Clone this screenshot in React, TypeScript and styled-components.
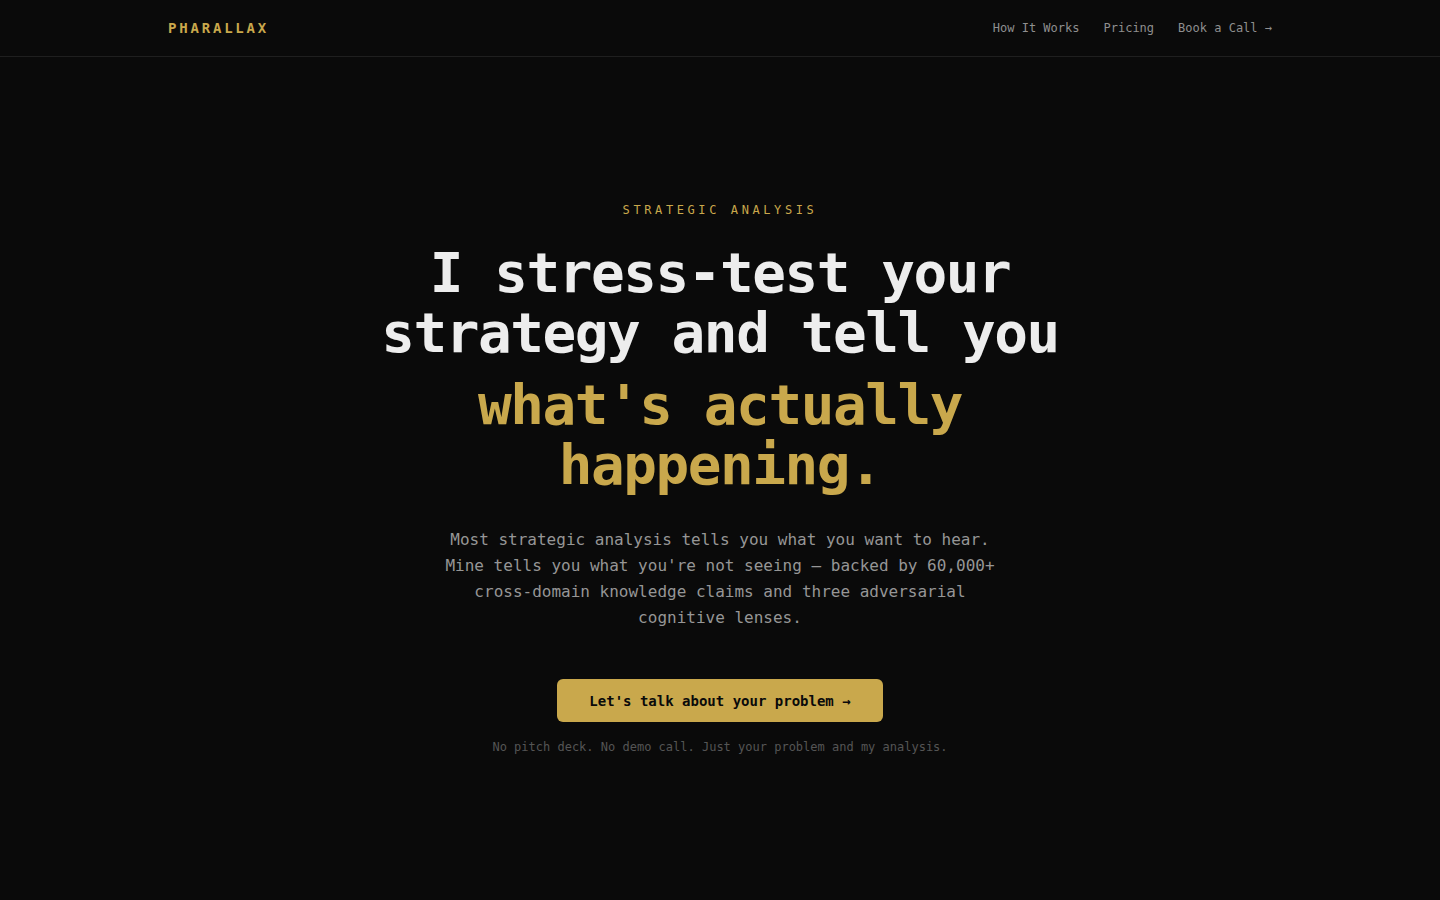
import styled, { createGlobalStyle } from "styled-components";

const GlobalStyle = createGlobalStyle`
    * {
        box-sizing: border-box;
    }

    body {
        margin: 0;
        background-color: #0a0a0a;
        color: #ededed;
        font-family: "DejaVu Sans Mono", "Liberation Mono", monospace;
    }
`

const Page = styled.div`
    min-height: 100vh;
    display: flex;
    flex-direction: column;
`

const Header = styled.header`
    border-bottom: 1px solid #1f1f1f;
`

const HeaderInner = styled.div`
    max-width: 1200px;
    margin: 0 auto;
    padding: 0 48px;
    height: 56px;
    display: flex;
    align-items: center;
    justify-content: space-between;
`

const Logo = styled.a`
    font-size: 14px;
    font-weight: 700;
    letter-spacing: 0.2em;
    color: #c9a84c;
    text-decoration: none;
`

const Nav = styled.nav`
    display: flex;
    gap: 24px;
`

const NavLink = styled.a`
    font-size: 12px;
    color: #8f8f8f;
    text-decoration: none;
`

const Hero = styled.main`
    flex: 1;
    display: flex;
    flex-direction: column;
    align-items: center;
    justify-content: center;
    text-align: center;
    padding: 0 24px;
`

const Eyebrow = styled.p`
    margin: 0 0 24px;
    font-size: 12px;
    line-height: 18px;
    letter-spacing: 0.3em;
    color: #c9a84c;
`

const Headline = styled.h1`
    margin: 0;
    max-width: 720px;
    font-size: 56px;
    line-height: 60px;
    font-weight: 700;
    letter-spacing: -0.026em;
    color: #ededed;
`

const Highlight = styled.span`
    display: block;
    margin-top: 12px;
    color: #c9a84c;
`

const Lead = styled.p`
    margin: 32px 0 0;
    max-width: 560px;
    font-size: 16px;
    line-height: 26px;
    color: #969696;
`

const CtaButton = styled.a`
    margin-top: 48px;
    display: inline-block;
    padding: 13px 32px 11px;
    font-size: 14px;
    line-height: 19px;
    font-weight: 700;
    color: #0a0a0a;
    background-color: #c9a84c;
    border-radius: 6px;
    text-decoration: none;
`

const Note = styled.p`
    margin: 16px 0 0;
    font-size: 12px;
    line-height: 18px;
    color: #555555;
`

function App() {

    return (
        <Page>
            <GlobalStyle />
            <Header>
                <HeaderInner>
                    <Logo href="#">PHARALLAX</Logo>
                    <Nav>
                        <NavLink href="#how">How It Works</NavLink>
                        <NavLink href="#pricing">Pricing</NavLink>
                        <NavLink href="#book">Book a Call →</NavLink>
                    </Nav>
                </HeaderInner>
            </Header>

            <Hero>
                <Eyebrow>STRATEGIC ANALYSIS</Eyebrow>

                <Headline>
                    I stress-test your strategy and tell you
                    <Highlight>what's actually happening.</Highlight>
                </Headline>

                <Lead>
                    Most strategic analysis tells you what you want to hear. Mine tells you
                    what you're not seeing — backed by 60,000+ cross-domain knowledge claims
                    and three adversarial cognitive lenses.
                </Lead>

                <CtaButton href="#book">Let's talk about your problem →</CtaButton>

                <Note>No pitch deck. No demo call. Just your problem and my analysis.</Note>
            </Hero>
        </Page>
    )
}

export default App
